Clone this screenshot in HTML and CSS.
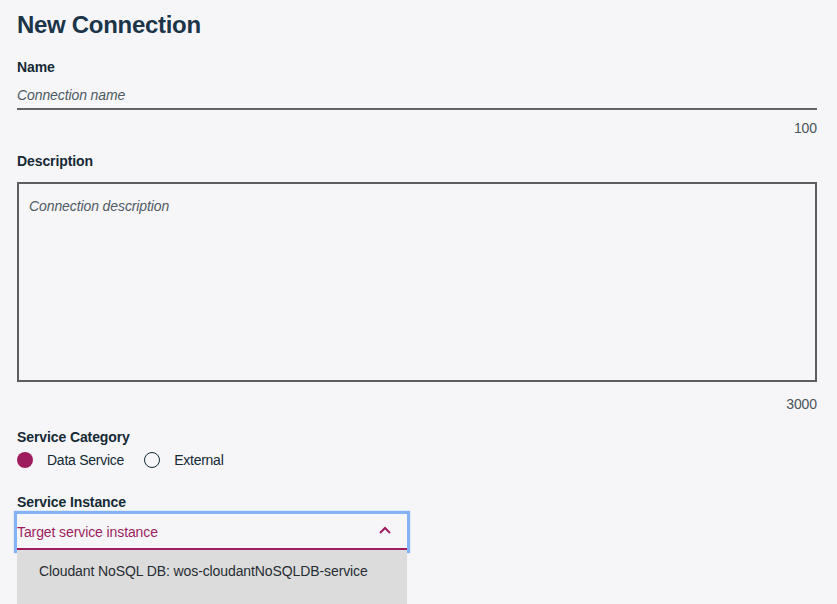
FILE: index.html
```html
<!DOCTYPE html>
<html>
<head>
<meta charset="utf-8">
<title>New Connection</title>
<link rel="stylesheet" href="styles.css">
</head>
<body>
<div class="page">
  <h1 class="title">New Connection</h1>

  <label class="field-label" for="name">Name</label>
  <input class="text-input" id="name" type="text" placeholder="Connection name">
  <div class="counter">100</div>

  <label class="field-label label-desc" for="desc">Description</label>
  <textarea class="text-area" id="desc" placeholder="Connection description"></textarea>
  <div class="counter counter-area">3000</div>

  <div class="field-label label-cat">Service Category</div>
  <div class="radio-row">
    <span class="radio radio-on"></span><span class="radio-text">Data Service</span>
    <span class="radio radio-off"></span><span class="radio-text">External</span>
  </div>

  <div class="field-label label-inst">Service Instance</div>
  <div class="dropdown">
    <span class="dropdown-text">Target service instance</span>
    <svg class="chevron" width="12" height="8" viewBox="0 0 12 8"><polyline points="1,7 6,2 11,7" fill="none" stroke="#9e1d5e" stroke-width="2"/></svg>
  </div>
  <div class="menu">
    <div class="menu-item">Cloudant NoSQL DB: wos-cloudantNoSQLDB-service</div>
    <div class="menu-item"></div>
  </div>
</div>
</body>
</html>
```

FILE: styles.css
```css
html, body {
  margin: 0;
  height: 604px;
  overflow: hidden;
  background: #f6f6f9;
}
body {
  font-family: "Liberation Sans", Arial, sans-serif;
  color: #152935;
  letter-spacing: -0.1px;
}
.page {
  padding: 10px 20px 0 17px;
}
.title {
  margin: 0;
  font-size: 24px;
  line-height: 30px;
  font-weight: bold;
  letter-spacing: -0.3px;
  color: #1b3447;
}
.field-label {
  display: block;
  margin-top: 18px;
  font-size: 14px;
  line-height: 18px;
  font-weight: bold;
  letter-spacing: -0.1px;
  color: #152935;
}
.text-input {
  display: block;
  box-sizing: border-box;
  width: 100%;
  height: 34px;
  margin: 0;
  padding: 5px 0 0 0;
  border: none;
  border-bottom: 2px solid #646464;
  background: transparent;
  font-family: inherit;
  font-size: 14px;
  letter-spacing: -0.1px;
  outline: none;
}
.text-input::placeholder,
.text-area::placeholder {
  color: #4f5a63;
  font-style: italic;
  opacity: 1;
}
.counter {
  margin-top: 9px;
  text-align: right;
  font-size: 14px;
  line-height: 18px;
  color: #4a535a;
}
.label-desc {
  margin-top: 15px;
}
.text-area {
  display: block;
  box-sizing: border-box;
  width: 100%;
  height: 200px;
  margin: 12px 0 0 0;
  padding: 13px 10px;
  border: 2px solid #5d5d5d;
  background: transparent;
  font-family: inherit;
  font-size: 14px;
  letter-spacing: -0.1px;
  line-height: 18px;
  resize: none;
  outline: none;
}
.counter-area {
  margin-top: 13px;
}
.label-cat {
  margin-top: 15px;
}
.radio-row {
  display: flex;
  align-items: center;
  margin-top: 5px;
  font-size: 14px;
  line-height: 18px;
}
.radio {
  box-sizing: border-box;
  width: 16px;
  height: 16px;
  border-radius: 50%;
  flex: none;
}
.radio-on {
  background: #9e1d5e;
}
.radio-off {
  border: 1.5px solid #152935;
  margin-left: 20px;
}
.radio-text {
  margin-left: 14px;
  letter-spacing: -0.25px;
  color: #152935;
}
.label-inst {
  margin-top: 24px;
}
.dropdown {
  display: flex;
  align-items: center;
  justify-content: space-between;
  box-sizing: border-box;
  width: 390px;
  height: 36px;
  margin-top: 3px;
  padding-top: 2px;
  border-bottom: 2px solid #9e1d5e;
  box-shadow: 0 0 1px 3px rgba(102, 163, 243, 0.8);
  font-size: 14px;
  line-height: 18px;
}
.dropdown-text {
  color: #9e1d5e;
}
.chevron {
  margin-right: 16px;
  margin-top: -4px;
}
.menu {
  width: 390px;
  background: #dcdcdc;
}
.menu-item {
  height: 18px;
  padding: 12px 22px;
  font-size: 14px;
  line-height: 18px;
  color: #262d33;
}
```
